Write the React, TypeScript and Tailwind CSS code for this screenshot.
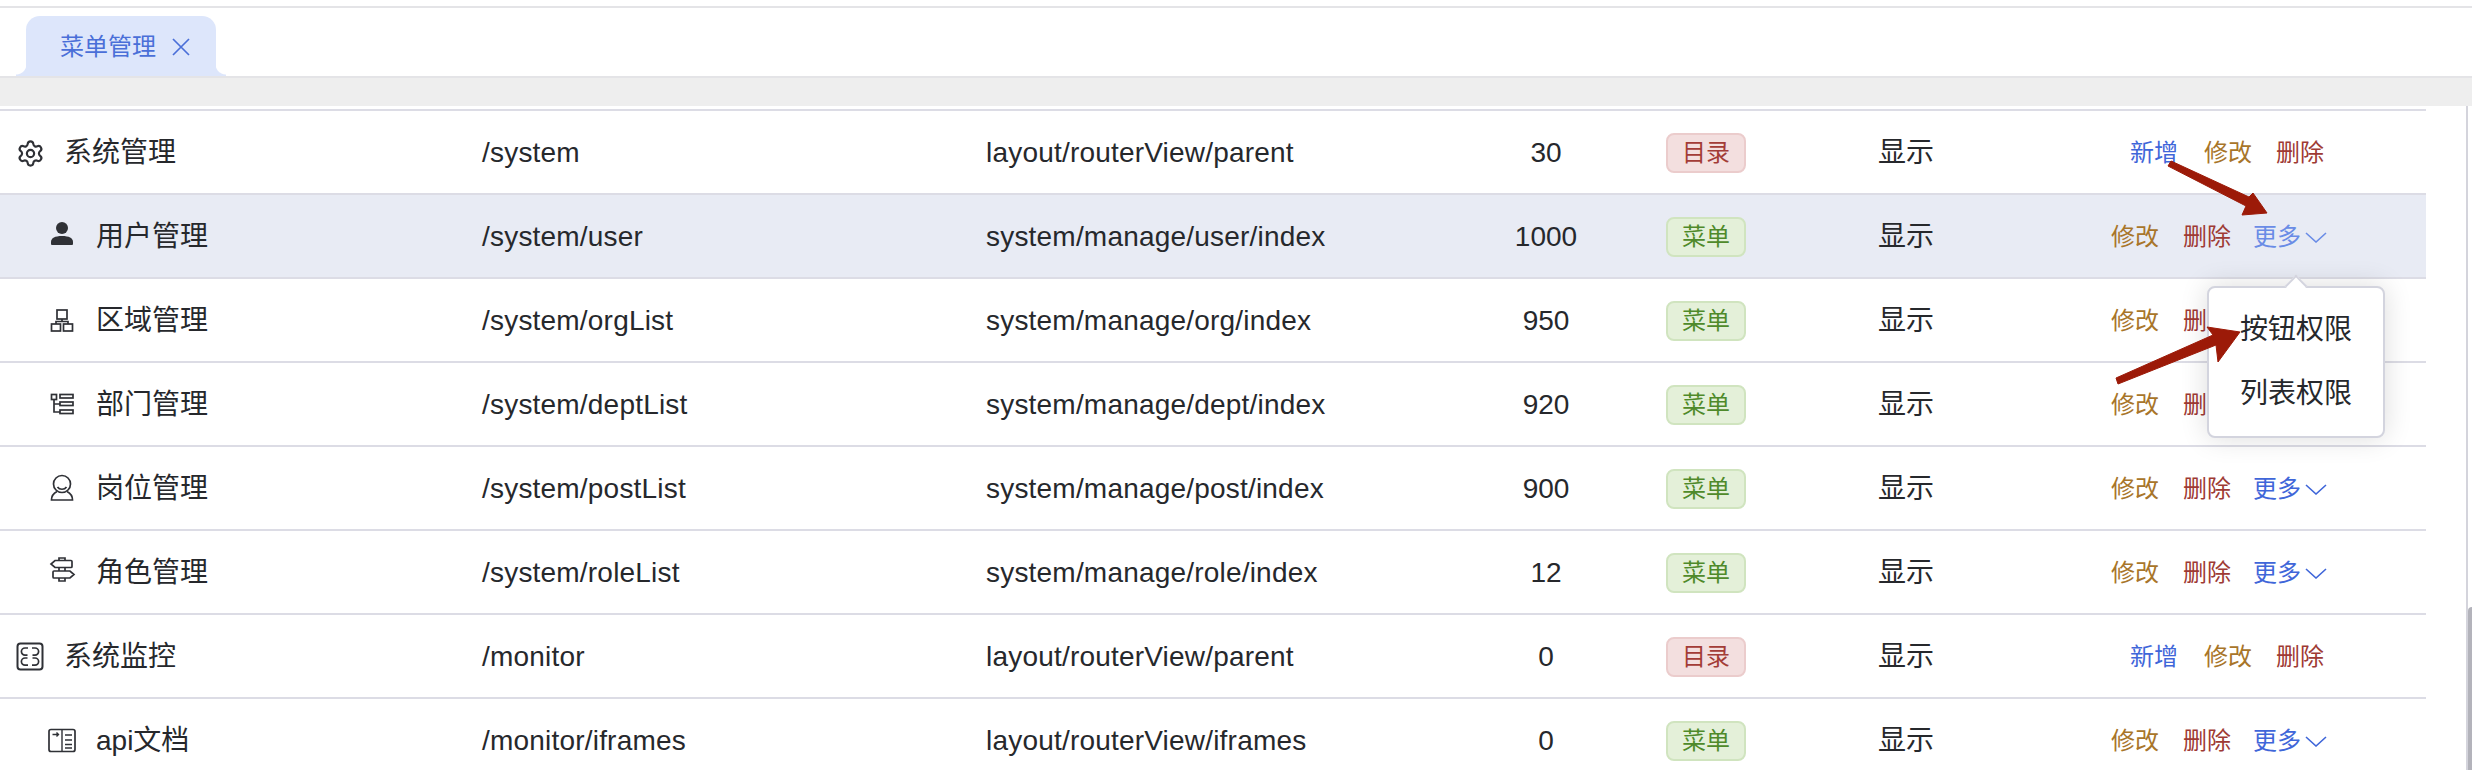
import React from "react";
import { Settings } from "lucide-react";

type Row = {
  name: string;
  icon: React.ReactNode;
  child: boolean;
  path: string;
  comp: string;
  sort: string;
  dir: boolean;
  hover?: boolean;
};

const Ico = ({ children, fill = "none" }: { children: React.ReactNode; fill?: string }) => (
  <svg viewBox="0 0 28 32" className="h-8 w-7" fill={fill} stroke="currentColor" strokeWidth="1.7">
    {children}
  </svg>
);

const rows: Row[] = [
  { name: "系统管理", icon: <Settings className="h-[29px] w-[29px] shrink-0" strokeWidth={1.8} />, child: false, path: "/system", comp: "layout/routerView/parent", sort: "30", dir: true },
  {
    name: "用户管理",
    icon: (
      <Ico fill="currentColor">
        <circle cx="14" cy="7" r="6" stroke="none" />
        <path stroke="none" d="M4 24a1 1 0 0 1-1-1v-2c0-4 4-6 11-6s11 2 11 6v2a1 1 0 0 1-1 1z" />
      </Ico>
    ),
    child: true,
    path: "/system/user",
    comp: "system/manage/user/index",
    sort: "1000",
    dir: false,
    hover: true,
  },
  {
    name: "区域管理",
    icon: (
      <Ico>
        <rect x="9" y="5" width="10" height="9" />
        <rect x="3.500" y="19" width="9" height="7" />
        <rect x="15.500" y="19" width="9" height="7" />
        <path d="M14 14v2.500M8 19v-2.500h12V19" />
      </Ico>
    ),
    child: true,
    path: "/system/orgList",
    comp: "system/manage/org/index",
    sort: "950",
    dir: false,
  },
  {
    name: "部门管理",
    icon: (
      <Ico>
        <rect x="3.500" y="5.500" width="5" height="5" />
        <rect x="12" y="5.500" width="13" height="3.500" />
        <rect x="12" y="13" width="13" height="3.500" />
        <rect x="12" y="21" width="13" height="3.500" />
        <path d="M6 10.500V23h6M6 15h6" />
      </Ico>
    ),
    child: true,
    path: "/system/deptList",
    comp: "system/manage/dept/index",
    sort: "920",
    dir: false,
  },
  {
    name: "岗位管理",
    icon: (
      <Ico>
        <circle cx="14" cy="11" r="8.500" />
        <path d="M9.500 14c2 3 7 3 9 0" />
        <path d="M9 18.500c-3 1.500-5.500 4-5.500 8.500h21c0-4.500-2.500-7-5.500-8.500" />
      </Ico>
    ),
    child: true,
    path: "/system/postList",
    comp: "system/manage/post/index",
    sort: "900",
    dir: false,
  },
  {
    name: "角色管理",
    icon: (
      <Ico>
        <path d="M7 3.500h16a1 1 0 0 1 1 1v5a1 1 0 0 1-1 1H7L3 7z" />
        <path d="M6 14h16l4 3.500-4 3.500H6a1 1 0 0 1-1-1v-5a1 1 0 0 1 1-1z" />
        <path d="M11 3.500V1h6v2.500M11 21v3h6v-3M11 10.500V14M17 10.500V14" />
      </Ico>
    ),
    child: true,
    path: "/system/roleList",
    comp: "system/manage/role/index",
    sort: "12",
    dir: false,
  },
  {
    name: "系统监控",
    icon: (
      <Ico>
        <rect x="1.500" y="2.500" width="25" height="26" rx="3" strokeWidth="2" />
        <path d="M12 7H9a3.600 3.600 0 0 0 0 7.200h2.500M16 7h3a3.600 3.600 0 0 1 0 7.200h-2.500" />
        <path d="M11.500 17H9a3.600 3.600 0 0 0 0 7.200h3M16.500 17H19a3.600 3.600 0 0 1 0 7.200h-3" />
      </Ico>
    ),
    child: false,
    path: "/monitor",
    comp: "layout/routerView/parent",
    sort: "0",
    dir: true,
  },
  {
    name: "api文档",
    icon: (
      <Ico>
        <rect x="1" y="4.500" width="26" height="22" rx="2" />
        <path d="M14 4.500v22M4.500 9.500h6M8.500 7.500l2 2-2 2M17 10h7M17 15h7M17 19.500h7M17 23h7" strokeWidth="1.400" />
      </Ico>
    ),
    child: true,
    path: "/monitor/iframes",
    comp: "layout/routerView/iframes",
    sort: "0",
    dir: false,
  },
];

const Tag = ({ dir }: { dir: boolean }) =>
  dir ? (
    <span className="flex h-10 w-20 items-center justify-center rounded-lg border-2 border-[#ebcccc] bg-[#f3dfdf] text-2xl text-[#a33c37]">
      目录
    </span>
  ) : (
    <span className="flex h-10 w-20 items-center justify-center rounded-lg border-2 border-[#d0e4bf] bg-[#e4f0d9] text-2xl text-[#4f8a2a]">
      菜单
    </span>
  );

const Actions = ({ row }: { row: Row }) =>
  row.dir ? (
    <div className="flex items-center justify-center pl-[2px] text-2xl">
      <span className="text-[#3f66d9]">新增</span>
      <span className="ml-[26px] text-[#a8752a]">修改</span>
      <span className="ml-6 text-[#9e3a34]">删除</span>
    </div>
  ) : (
    <div className="flex items-center justify-center pr-[14px] text-2xl">
      <span className="text-[#a8752a]">修改</span>
      <span className="ml-6 text-[#9e3a34]">删除</span>
      <span className={`ml-[22px] flex items-center gap-[4px] ${row.hover ? "text-[#6a8ce6]" : "text-[#3f66d9]"}`}>
        更多
        <svg viewBox="0 0 22 11" className="h-[11px] w-[22px]" fill="none" stroke="currentColor" strokeWidth="1.600">
          <path d="M1 1l10 9 10-9" />
        </svg>
      </span>
    </div>
  );

export default function App() {
  return (
    <div className="relative h-[770px] w-full overflow-hidden bg-white font-['Liberation_Sans','Noto_Sans_CJK_SC',sans-serif] text-[28px] text-[#26282c]">
      <div className="mt-[6px] h-[2px] bg-[#e4e4e7]" />
      {/* tab bar */}
      <div className="flex h-[70px] items-end border-b-2 border-[#e4e4e7] pl-[26px]">
        <div className="relative flex h-[60px] w-[190px] items-center rounded-t-[14px] bg-[#dde6fb] pt-[1px] pl-[34px] text-2xl text-[#4a6fd8]">
          <span className="absolute bottom-0 -left-[10px] h-[12px] w-[10px] bg-[radial-gradient(circle_at_0_0,transparent_10px,#dde6fb_11px)]" />
          <span className="absolute -right-[10px] bottom-0 h-[12px] w-[10px] bg-[radial-gradient(circle_at_100%_0,transparent_10px,#dde6fb_11px)]" />
          菜单管理
          <svg viewBox="0 0 18 18" className="ml-[16px] h-[18px] w-[18px]" fill="none" stroke="currentColor" strokeWidth="1.700">
            <path d="M1 1l16 16M17 1L1 17" />
          </svg>
        </div>
      </div>
      <div className="h-[28px] bg-[#eeeeee]" />
      <div className="flex h-[664px]">
        {/* table */}
        <div className="w-[2426px] pt-[3px]">
          <div className="border-t-2 border-[#dcdce5]">
            {rows.map((r) => (
              <div
                key={r.name}
                className={`grid h-[84px] grid-cols-[482px_504px_480px_160px_160px_240px_400px] items-center border-b-2 border-[#dcdce5] pt-[2px] ${r.hover ? "bg-[#e8ebf4]" : ""}`}
              >
                <div className={`flex items-center gap-5 ${r.child ? "pl-12" : "pl-4"}`}>
                  <span className="flex w-7 items-center justify-center text-[#2f3136]">{r.icon}</span>
                  {r.name}
                </div>
                <div className="tracking-[0.2px]">{r.path}</div>
                <div className="tracking-[0.2px]">{r.comp}</div>
                <div className="text-center">{r.sort}</div>
                <div className="flex justify-center">
                  <Tag dir={r.dir} />
                </div>
                <div className="text-center">显示</div>
                <Actions row={r} />
              </div>
            ))}
          </div>
        </div>
        {/* scrollbar */}
        <div className="ml-10 flex w-[6px] flex-col border-l-2 border-[#d4d4dc]">
          <div className="h-[501px]" />
          <div className="flex-1 rounded-tl-[4px] bg-[#b3b3bb]" />
        </div>
      </div>

      {/* dropdown */}
      <div className="absolute top-[286px] left-[2207px] w-[178px] rounded-lg border-2 border-[#d3d4de] bg-white pt-[10px] pb-[10px] text-center leading-[64px] shadow-[0_0_28px_rgba(0,0,0,0.14)]">
        <span className="absolute -top-[10px] left-[79px] h-4 w-4 rotate-45 border-t-2 border-l-2 border-[#d3d4de] bg-white" />
        <div>按钮权限</div>
        <div>列表权限</div>
      </div>

      {/* annotation arrows */}
      <svg className="pointer-events-none absolute top-0 left-0 h-[770px] w-[2472px]" viewBox="0 0 2472 770">
        <polygon
          fill="#9c1a08"
          stroke="#9c1a08"
          strokeWidth="1"
          strokeLinejoin="round"
          points="2168,166 2171,161 2249,197 2253,193 2267,213 2242,215 2246,206"
        />
        <polygon
          fill="#9c1a08"
          stroke="#9c1a08"
          strokeWidth="1"
          strokeLinejoin="round"
          points="2116,378 2213,335 2207,327 2240,332 2218,362 2216,345 2118,384"
        />
      </svg>
    </div>
  );
}
